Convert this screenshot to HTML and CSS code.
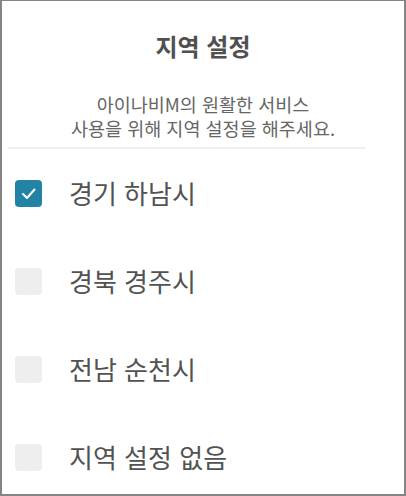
FILE: index.html
```html
<!DOCTYPE html>
<html lang="ko">
<head>
<meta charset="utf-8">
<link rel="stylesheet" href="styles.css">
</head>
<body>
<div class="frame">
  <header class="head">
    <h1 class="title">지역 설정</h1>
    <p class="desc">아이나비M의 원활한 서비스<br>사용을 위해 지역 설정을 해주세요.</p>
  </header>
  <div class="divider"></div>
  <ul class="list">
    <li class="item">
      <span class="box checked">
        <svg viewBox="0 0 27 27" width="27" height="27"><path d="M8 14 L12 18 L19.5 9.5" fill="none" stroke="#fff" stroke-width="2" stroke-linecap="round" stroke-linejoin="round"/></svg>
      </span>
      <span class="label">경기 하남시</span>
    </li>
    <li class="item"><span class="box"></span><span class="label">경북 경주시</span></li>
    <li class="item"><span class="box"></span><span class="label">전남 순천시</span></li>
    <li class="item"><span class="box"></span><span class="label">지역 설정 없음</span></li>
  </ul>
</div>
</body>
</html>
```
FILE: styles.css
```css
html, body {
  margin: 0;
  padding: 0;
  background: #fff;
}
.frame {
  width: 406px;
  height: 496px;
  box-sizing: border-box;
  border: 2px solid #858585;
  border-top-width: 1px;
  overflow: hidden;
  font-family: "Noto Sans CJK KR", "Noto Sans", sans-serif;
}
.head {
  text-align: center;
  padding-top: 29px;
}
.title {
  margin: 0;
  font-size: 24px;
  line-height: 32px;
  font-weight: 700;
  color: #505050;
}
.desc {
  margin: 30px 0 0;
  font-size: 18.5px;
  line-height: 24px;
  color: #666;
}
.divider {
  margin: 7px 0 0 6px;
  width: 358px;
  height: 2px;
  background: #f0f0f0;
}
.list {
  list-style: none;
  margin: 0;
  padding: 0;
}
.item {
  height: 88px;
  display: flex;
  align-items: center;
  padding-left: 13px;
}
.box {
  width: 27px;
  height: 27px;
  border-radius: 4px;
  background: #eeeeee;
  display: flex;
  flex: none;
}
.box.checked {
  background: #2383a5;
}
.label {
  margin-left: 27px;
  font-size: 26px;
  line-height: 36px;
  color: #525252;
}
```
